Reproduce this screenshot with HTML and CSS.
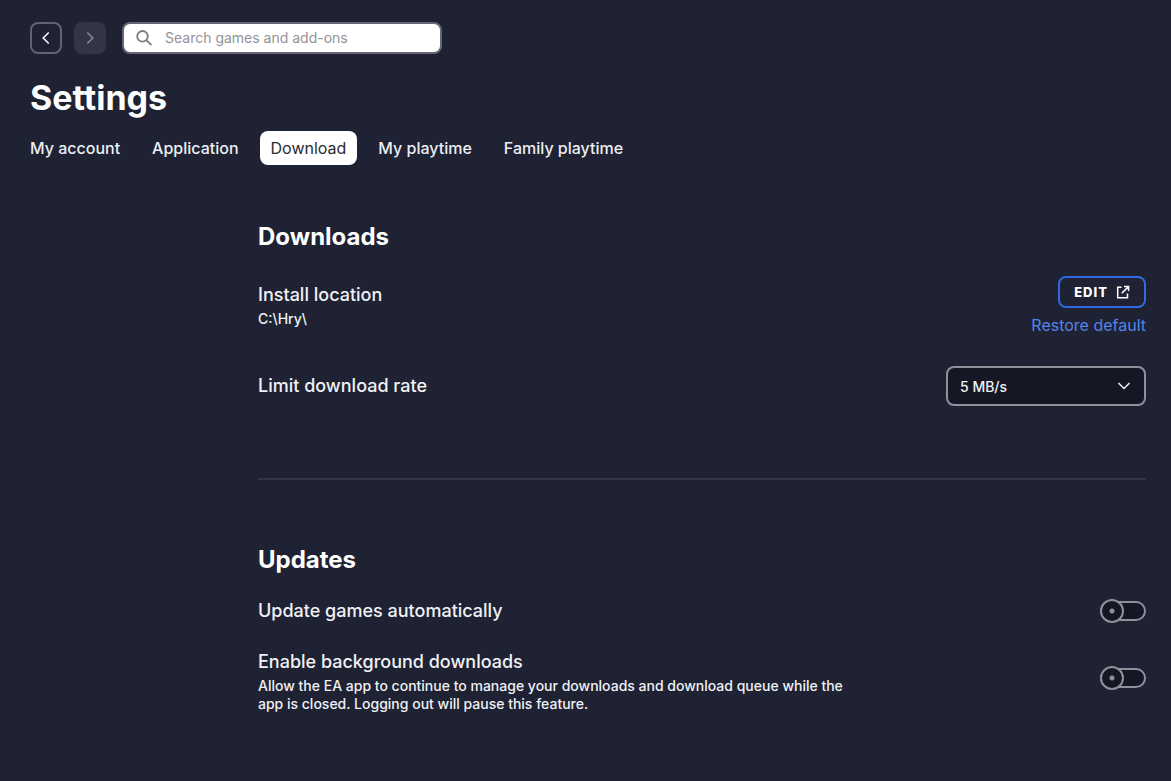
FILE: index.html
```html
<!DOCTYPE html>
<html lang="en">
<head>
<meta charset="utf-8">
<meta name="viewport" content="width=device-width, initial-scale=1">
<title>Settings</title>
<link rel="stylesheet" href="styles.css">
</head>
<body>
<header class="topbar">
  <button class="nav-button" type="button" aria-label="Back">
    <svg width="16" height="16" viewBox="0 0 16 16"><path d="M10.700 2.500 5.200 8l5.500 5.500"/></svg>
  </button>
  <button class="nav-button nav-button-disabled" type="button" aria-label="Forward" disabled>
    <svg width="16" height="16" viewBox="0 0 16 16"><path d="M5.300 2.500 10.800 8l-5.500 5.500"/></svg>
  </button>
  <label class="search">
    <svg class="search-icon" width="18" height="18" viewBox="0 0 18 18"><circle cx="7.5" cy="7.300" r="5.300"/><path d="m11.400 11.200 5 5"/></svg>
    <input class="search-input" type="search" placeholder="Search games and add-ons" aria-label="Search games and add-ons">
  </label>
</header>
<h1 class="page-title">Settings</h1>
<nav class="tabs">
  <a class="tab" href="#account">My account</a>
  <a class="tab" href="#application">Application</a>
  <a class="tab tab-active" href="#download" aria-current="page">Download</a>
  <a class="tab" href="#playtime">My playtime</a>
  <a class="tab" href="#family">Family playtime</a>
</nav>
<main class="content">
  <section class="section">
    <h2 class="section-title">Downloads</h2>
    <div class="row row-location">
      <div class="row-text">
        <h3 class="row-title">Install location</h3>
        <p class="row-note">C:\Hry\</p>
      </div>
      <div class="actions">
        <button class="edit-button" type="button">EDIT
          <svg width="14" height="14" viewBox="0 0 14 14"><path d="M5.500 2.200H1.700v10.600h9.800V8.500M8 1.400h4.600V6M12.400 1.600 5.800 8.200"/></svg>
        </button>
        <a class="restore-link" href="#restore">Restore default</a>
      </div>
    </div>
    <div class="row">
      <label class="row-title" for="rate">Limit download rate</label>
      <div class="select-box">
        <select class="select" id="rate"><option>5 MB/s</option></select>
        <svg class="select-arrow" width="14" height="14" viewBox="0 0 14 14"><path d="m1.500 4 5.500 5.500L12.500 4"/></svg>
      </div>
    </div>
  </section>
  <hr class="divider">
  <section class="section">
    <h2 class="section-title">Updates</h2>
    <div class="row row-update">
      <label class="row-title" for="auto-update">Update games automatically</label>
      <input class="toggle" id="auto-update" type="checkbox">
    </div>
    <div class="row row-background">
      <div class="row-text">
        <label class="row-title" for="background">Enable background downloads</label>
        <p class="row-note">Allow the EA app to continue to manage your downloads and download queue while the app is closed. Logging out will pause this feature.</p>
      </div>
      <input class="toggle" id="background" type="checkbox">
    </div>
  </section>
</main>
</body>
</html>
```
FILE: styles.css
```css
* {
  box-sizing: border-box;
}

body {
  margin: 0;
  padding: 22px 25px 24px 30px;
  background: #1e2233;
  color: #f0f1f5;
  font-family: Inter, "Liberation Sans", sans-serif;
  font-size: 16px;
}

h1, h2, h3, p {
  margin: 0;
}

button, input, select {
  font-family: inherit;
  margin: 0;
}

svg {
  display: block;
  flex: none;
  fill: none;
  stroke: currentColor;
  stroke-width: 1.5;
}

.topbar {
  display: flex;
  align-items: center;
  gap: 12px;
}

.nav-button {
  display: flex;
  align-items: center;
  justify-content: center;
  width: 32px;
  height: 32px;
  padding: 0;
  border: 2px solid #62636f;
  border-radius: 8px;
  background: transparent;
  color: #ffffff;
}

.nav-button-disabled {
  border-color: #333445;
  background: #333445;
  color: #898a95;
}

.search {
  display: flex;
  align-items: center;
  gap: 12px;
  flex: 0 1 320px;
  height: 32px;
  margin-left: 4px;
  padding: 0 11px;
  border: 2px solid #666773;
  border-radius: 8px;
  background: #ffffff;
}

.search-icon {
  color: #7c7d84;
  stroke-width: 1.8;
}

.search-input {
  flex: 1;
  min-width: 0;
  padding: 0;
  border: 0;
  outline: 0;
  background: transparent;
  color: #222222;
  font-size: 14px;
  line-height: 16px;
}

.search-input::placeholder {
  color: #929398;
}

.page-title {
  margin-top: 22px;
  color: #ffffff;
  font-size: 34px;
  font-weight: 700;
  line-height: 44px;
}

.tabs {
  display: flex;
  flex-wrap: wrap;
  gap: 10px;
  margin: 11px 0 0 -11px;
}

.tab {
  padding: 5px 11px;
  border-radius: 8px;
  color: #eceef4;
  font-weight: 500;
  line-height: 24px;
  text-decoration: none;
}

.tab-active {
  background: #ffffff;
  color: #2b2b30;
  font-weight: 400;
}

.content {
  margin: 56px 0 0 228px;
}

.section-title {
  color: #ffffff;
  font-size: 24px;
  font-weight: 700;
  line-height: 32px;
}

.row {
  display: flex;
  align-items: center;
  justify-content: space-between;
  gap: 24px;
}

.row-location {
  margin: 23px 0 31px;
}

.row-text {
  max-width: 600px;
}

.row-title {
  display: block;
  font-size: 18px;
  font-weight: 500;
  line-height: 24px;
}

.row-note {
  margin-top: 3px;
  font-size: 14px;
  font-weight: 500;
  line-height: 18px;
}

.actions {
  display: flex;
  flex-direction: column;
  align-items: flex-end;
  gap: 7px;
}

.edit-button {
  display: flex;
  align-items: center;
  gap: 8px;
  height: 32px;
  padding: 0 14px;
  border: 2px solid #3269e0;
  border-radius: 8px;
  background: transparent;
  color: #ffffff;
  font-size: 13px;
  font-weight: 800;
  letter-spacing: 1px;
}

.restore-link {
  color: #5585ea;
  font-size: 16px;
  line-height: 20px;
  text-decoration: none;
}

.select-box {
  position: relative;
  width: 200px;
}

.select {
  display: block;
  width: 100%;
  height: 40px;
  padding: 0 36px 0 12px;
  border: 2px solid #8f909a;
  border-radius: 8px;
  appearance: none;
  background: #151724;
  color: #f2f3f7;
  font-size: 14px;
  font-weight: 500;
}

.select-arrow {
  position: absolute;
  top: 13px;
  right: 15px;
  pointer-events: none;
}

.divider {
  height: 2px;
  margin: 72px 0 64px;
  border: 0;
  background: #353748;
}

.row-update {
  margin: 23px 0 27px;
}

.row-background {
  align-items: flex-start;
}

.row-background .toggle {
  margin-top: 18px;
}

.toggle {
  appearance: none;
  position: relative;
  flex: none;
  width: 46px;
  height: 20px;
  border: 2px solid #8f909a;
  border-radius: 10px;
  background: #151724;
}

.toggle::before {
  content: "";
  position: absolute;
  top: -4px;
  left: -2px;
  box-sizing: border-box;
  width: 24px;
  height: 24px;
  border: 2px solid #8f909a;
  border-radius: 50%;
  background: radial-gradient(circle, #8f909a 2px, #151724 3px);
}

.toggle:checked::before {
  left: 20px;
}
```
